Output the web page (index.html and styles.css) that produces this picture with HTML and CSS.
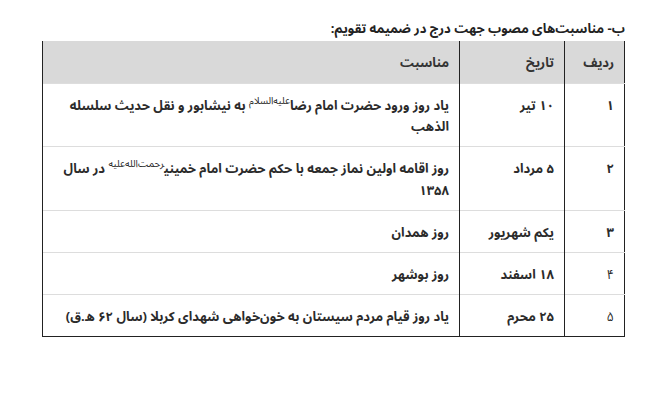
FILE: index.html
```html
<!DOCTYPE html>
<html lang="fa" dir="rtl">
<head>
<meta charset="utf-8">
<link rel="stylesheet" href="styles.css">
</head>
<body>
<div class="page">
  <p class="title">ب- مناسبت‌های مصوب جهت درج در ضمیمه تقویم:</p>
  <table class="events">
    <thead>
      <tr><th class="c-num">ردیف</th><th class="c-date">تاریخ</th><th class="c-desc">مناسبت</th></tr>
    </thead>
    <tbody>
      <tr><td class="c-num">۱</td><td class="c-date">۱۰ تیر</td><td class="c-desc">یاد روز ورود حضرت امام رضا<sup>علیه‌السلام</sup> به نیشابور و نقل حدیث سلسله الذهب</td></tr>
      <tr><td class="c-num">۲</td><td class="c-date">۵ مرداد</td><td class="c-desc">روز اقامه اولین نماز جمعه با حکم حضرت امام خمینی<sup>رحمت‌الله‌علیه</sup> در سال ۱۳۵۸</td></tr>
      <tr><td class="c-num">۳</td><td class="c-date">یکم شهریور</td><td class="c-desc">روز همدان</td></tr>
      <tr><td class="c-num light">۴</td><td class="c-date">۱۸ اسفند</td><td class="c-desc">روز بوشهر</td></tr>
      <tr><td class="c-num light">۵</td><td class="c-date">۲۵ محرم</td><td class="c-desc">یاد روز قیام مردم سیستان به خون‌خواهی شهدای کربلا (سال ۶۲ ه.ق)</td></tr>
    </tbody>
  </table>
</div>
</body>
</html>
```
FILE: styles.css
```css
html, body { margin: 0; padding: 0; background: #fff; }
.page {
  width: 583px;
  margin: 0 40px 0 0;
  padding-top: 21px;
  font-family: "Noto Sans Arabic", "DejaVu Sans", sans-serif;
  color: #333;
}
.title {
  margin: 0 0 3px 0;
  font-size: 13px;
  font-weight: bold;
  line-height: 17px;
  color: #222;
  text-align: right;
}
.events {
  width: 583px;
  border-collapse: collapse;
  font-size: 13px;
  border-left: 1px solid #222;
  border-right: 1px solid #222;
  border-bottom: 1px solid #222;
}
.events th, .events td {
  text-align: right;
  vertical-align: top;
  padding: 12px 10px 7.5px 9px;
  line-height: 21.5px;
  font-weight: bold;
  border-left: 1px solid #222;
  border-top: 1px solid #ddd;
}
.events th {
  background: #d9d9d9;
  color: #333;
  border-top: none;
  padding-top: 12px;
  padding-bottom: 8px;
}
.events td { color: #2b2b2b; }
.c-num { width: 40px; }
.c-date { width: 85px; }
.light { font-weight: normal !important; }
sup {
  font-size: 10px;
  font-weight: normal;
  line-height: 0;
  vertical-align: 6px;
}
```
